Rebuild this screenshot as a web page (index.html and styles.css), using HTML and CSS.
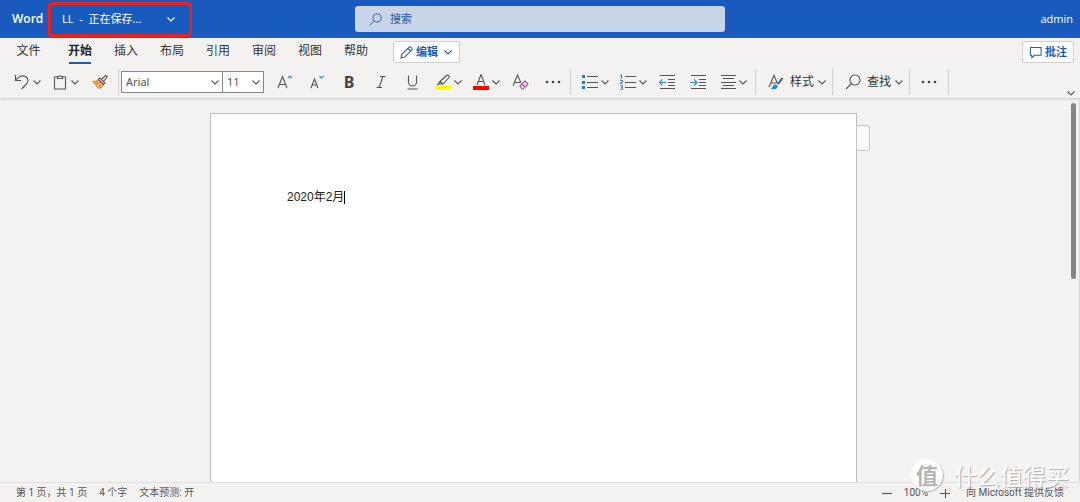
FILE: index.html
```html
<!DOCTYPE html>
<html lang="zh-CN">
<head>
<meta charset="utf-8">
<meta name="viewport" content="width=device-width, initial-scale=1">
<title>LL - Word</title>
<link rel="stylesheet" href="styles.css">
</head>
<body>
<svg class="defs" aria-hidden="true">
  <symbol id="chev" viewBox="0 0 10 10"><path d="M1.500 3.500l3.500 3.500 3.500-3.500"/></symbol>
  <symbol id="search" viewBox="0 0 16 16"><circle cx="10" cy="6" r="5"/><path d="M6.500 9.500L1 15"/></symbol>
  <symbol id="more" viewBox="0 0 16 16"><g fill="#444" stroke="none"><circle cx="2" cy="8" r="1.300"/><circle cx="8" cy="8" r="1.300"/><circle cx="14" cy="8" r="1.300"/></g></symbol>
</svg>
<header class="topbar">
  <div class="topbar-left">
    <span class="brand">Word</span>
    <button class="doc-title" type="button"><span>LL&nbsp; -&nbsp; 正在保存...</span><svg class="chev"><use href="#chev"/></svg></button>
  </div>
  <label class="search">
    <svg class="search-icon"><use href="#search"/></svg>
    <input type="search" placeholder="搜索" aria-label="搜索">
  </label>
  <button class="account" type="button">admin</button>
</header>

<section class="ribbon">
  <div class="tab-row">
    <nav class="tabs">
      <button class="tab tab-file" type="button">文件</button>
      <button class="tab active" type="button">开始</button>
      <button class="tab" type="button">插入</button>
      <button class="tab" type="button">布局</button>
      <button class="tab" type="button">引用</button>
      <button class="tab" type="button">审阅</button>
      <button class="tab" type="button">视图</button>
      <button class="tab" type="button">帮助</button>
    </nav>
    <button class="pill" type="button">
      <svg class="pill-icon" viewBox="0 0 14 14"><path d="M1 13l1-4 7.500-7.500a1.600 1.600 0 0 1 2.500 0l.5.5a1.600 1.600 0 0 1 0 2.500L5 12zM8.500 2.500l3 3"/></svg>
      编辑
      <svg class="chev"><use href="#chev"/></svg>
    </button>
    <button class="pill comments" type="button">
      <svg class="pill-icon" viewBox="0 0 14 14"><path d="M1.500 1.500h11.500v8.500H6l-3 2.500V10H1.500z"/></svg>
      批注
    </button>
  </div>

  <div class="toolbar">
    <div class="group group-clip">
      <button class="split" type="button" aria-label="撤消"><svg class="icon" viewBox="0 0 16 16"><path d="M1.500 1v5.500H7M1.500 6.500C5 2.500 8.500 1 11.500 2.500c3.500 2 3 5.500.5 8L7.500 15"/></svg><svg class="chev"><use href="#chev"/></svg></button>
      <button class="split" type="button" aria-label="粘贴"><svg class="icon" viewBox="0 0 16 16"><path d="M5.500 3H2.500v12h11V3h-3M5.500 4.500v-2h1.300a1.300 1.300 0 0 1 2.400 0h1.300v2z"/></svg><svg class="chev"><use href="#chev"/></svg></button>
      <button class="tool" type="button" aria-label="格式刷"><svg class="icon" viewBox="0 0 16 16"><path d="M1 7.500c2.500.5 4-.5 5.500-2l5 5c-1 2-2 3-4 4z" fill="#f8b878" stroke="#e8822c"/><path d="M3 9.500c3 0 4-1 5-1.500M7 13l2-3" stroke="#e8822c"/><path d="M6.500 5.500l1.500-1.500 5 5-1.500 1.500zM9.500 5.500L13 2a1.200 1.200 0 0 1 1.700 1.700L11.500 7.500" fill="#f3f2f1"/></svg></button>
    </div>
    <div class="group group-font">
      <div class="combo combo-font"><select aria-label="字体"><option>Arial</option></select><svg class="chev"><use href="#chev"/></svg></div>
      <div class="combo combo-size"><select aria-label="字号"><option>11</option></select><svg class="chev"><use href="#chev"/></svg></div>
      <button class="tool first-tool" type="button" aria-label="增大字号"><svg class="icon" viewBox="0 0 16 16"><path d="M1 14L5.500 2.500 10 14M2.600 10.500h5.800"/><path d="M11 4l2-2 2 2" stroke="#2b88d8"/></svg></button>
      <button class="tool" type="button" aria-label="减小字号"><svg class="icon" viewBox="0 0 16 16"><path d="M2 14L5.500 5l3.500 9M3.300 11h4.400"/><path d="M10.500 2l2 2 2-2" stroke="#2b88d8"/></svg></button>
      <button class="tool letter bold" type="button" aria-label="加粗">B</button>
      <button class="tool" type="button" aria-label="倾斜"><svg class="icon" viewBox="0 0 16 16"><path d="M7 2.500h5.500M9.800 2.500L6.200 13.500M3.500 13.500H9"/></svg></button>
      <button class="tool" type="button" aria-label="下划线"><svg class="icon" viewBox="0 0 16 16"><path d="M3.500 1.500v6.500a4 4 0 0 0 8 0V1.500M2.500 15h10"/></svg></button>
      <button class="split" type="button" aria-label="突出显示"><svg class="icon" viewBox="0 0 16 16"><path d="M5 7.500l6.500-6c1-1 3.500.5 2.500 2L8 10zM5 7.500L3.500 10H8M3.500 10l-1.500 1"/><path class="swatch" d="M0 12h16v4H0z" fill="#ff0"/></svg><svg class="chev"><use href="#chev"/></svg></button>
      <button class="split" type="button" aria-label="字体颜色"><svg class="icon" viewBox="0 0 16 16"><path d="M4 11L8 .5l4 10.500M5.500 7.500h5"/><path class="swatch" d="M0 12h16v4H0z" fill="#f00"/></svg><svg class="chev"><use href="#chev"/></svg></button>
      <button class="tool" type="button" aria-label="清除格式"><svg class="icon" viewBox="0 0 16 16"><path d="M0 12L4.500 1 8 9M1.500 8.500h5.500"/><path d="M7 12l5-5 3 3-5 5H9zM9 10l3 3" stroke="#a846b5"/></svg></button>
      <button class="tool" type="button" aria-label="更多字体选项"><svg class="icon"><use href="#more"/></svg></button>
    </div>
    <div class="group group-para">
      <button class="split" type="button" aria-label="项目符号"><svg class="icon" viewBox="0 0 16 16"><path d="M5 2.500h11M5 8.500h11M5 13.500h11"/><path d="M0 1h3v3H0zM0 7h3v3H0zM0 12h3v3H0z" fill="#1e7fcb" stroke="none"/></svg><svg class="chev"><use href="#chev"/></svg></button>
      <button class="split" type="button" aria-label="编号"><svg class="icon" viewBox="0 0 16 16"><path d="M5 2.500h11M5 8.500h11M5 13.500h11"/><path d="M0 1h1.500v4M.3 6.500h2v1.300L.3 9.500h2.200M.3 11.500h2v2H1M2.300 13.500v2h-2" stroke="#2b88d8"/></svg><svg class="chev"><use href="#chev"/></svg></button>
      <button class="tool snug" type="button" aria-label="减少缩进"><svg class="icon" viewBox="0 0 16 16"><path d="M1 1.500h15M9 5.500h7M9 8.500h7M9 11.500h7M1 14.500h15"/><path d="M7.500 8.500h-7M3.500 5.500l-3 3 3 3" stroke="#2b88d8"/></svg></button>
      <button class="tool" type="button" aria-label="增加缩进"><svg class="icon" viewBox="0 0 16 16"><path d="M1 1.500h15M9 5.500h7M9 8.500h7M9 11.500h7M1 14.500h15"/><path d="M0 8.500h7M4 5.500l3 3-3 3" stroke="#2b88d8"/></svg></button>
      <button class="split" type="button" aria-label="对齐"><svg class="icon" viewBox="0 0 16 16"><path d="M1 1.500h15M3 4.500h11M1 8.500h15M3 11.500h11M1 14.500h15"/></svg><svg class="chev"><use href="#chev"/></svg></button>
    </div>
    <div class="group group-wide">
      <button class="split labelled" type="button"><svg class="icon" viewBox="0 0 16 16"><path d="M1 13L6 1.500l3.500 8M3 9h5.500"/><path d="M14.500 4l-4.500 6" stroke-width="2"/><path d="M2.500 15c2 0 2-4.500 4.500-4.500 3 0 3.500 2.500 1.500 4-1.500 1-4 1-6 .5z" fill="#2b88d8" stroke="none"/></svg><span>样式</span><svg class="chev"><use href="#chev"/></svg></button>
    </div>
    <div class="group group-wide">
      <button class="split labelled" type="button"><svg class="icon"><use href="#search"/></svg><span>查找</span><svg class="chev"><use href="#chev"/></svg></button>
    </div>
    <div class="group group-last">
      <button class="tool" type="button" aria-label="更多选项"><svg class="icon"><use href="#more"/></svg></button>
    </div>
    <button class="collapse" type="button" aria-label="折叠功能区"><svg class="chev"><use href="#chev"/></svg></button>
  </div>
</section>

<main class="workspace">
  <article class="page">
    <p class="line">2020年2月<span class="caret"></span></p>
    <div class="page-flag"></div>
  </article>
  <div class="scroll-thumb"></div>
</main>

<footer class="status">
  <span>第 1 页，共 1 页</span>
  <span>4 个字</span>
  <span>文本预测: 开</span>
  <div class="zoom">
    <button type="button" aria-label="缩小"><svg viewBox="0 0 10 10"><path d="M0 5.500h10"/></svg></button>
    <span>100%</span>
    <button type="button" aria-label="放大"><svg viewBox="0 0 10 10"><path d="M0 5.500h10M5.500 1v9"/></svg></button>
  </div>
  <button class="feedback" type="button">向 Microsoft 提供反馈</button>
</footer>

<div class="watermark"><span class="seal">值</span><span class="mark">什么值得买</span></div>
</body>
</html>
```
FILE: styles.css
```css
* { box-sizing: border-box; }

body {
  margin: 0;
  height: 100vh;
  display: flex;
  flex-direction: column;
  overflow: hidden;
  position: relative;
  background: #f3f3f3;
  color: #333;
  font: 12px/16px "Noto Sans", "Noto Sans CJK SC", sans-serif;
}

button, input, select {
  font: inherit;
  color: inherit;
  background: none;
  border: 0;
  margin: 0;
  padding: 0;
}

svg {
  flex: none;
  fill: none;
  stroke: currentColor;
  stroke-width: 1.1;
}

.defs { position: absolute; width: 0; height: 0; }
.chev { width: 10px; height: 10px; }
.icon { width: 16px; height: 16px; }
.swatch { stroke: none; }

/* Top bar */
.topbar {
  display: grid;
  grid-template-columns: 1fr 370px 1fr;
  align-items: center;
  height: 38px;
  background: #185abd;
  color: #fff;
}

.topbar-left { display: flex; align-items: center; padding-left: 12px; }
.brand { width: 36px; font: 600 12px/16px "Open Sans", sans-serif; }

.doc-title {
  display: flex;
  align-items: center;
  justify-content: space-between;
  width: 144px;
  height: 35px;
  padding: 0 13px 0 11px;
  border: 3px solid #e5231f;
  border-radius: 4px;
  font-size: 11px;
}

.search {
  display: flex;
  align-items: center;
  gap: 8px;
  height: 26px;
  padding: 0 14px;
  border-radius: 3px;
  background: #c8d4e8;
  color: #2b579a;
}

.search-icon { width: 13px; height: 13px; }
.search input { flex: 1; min-width: 0; outline: 0; font-size: 11px; }
.search input::placeholder { color: #2b579a; opacity: 1; }
.account { justify-self: end; padding-right: 7px; font: 11px/16px "Open Sans", sans-serif; }

/* Ribbon */
.ribbon {
  background: #f3f2f1;
  border-bottom: 1px solid #d6d6d6;
  box-shadow: 0 1px 2px #dedede;
}

.tab-row { display: flex; align-items: center; height: 28px; padding-right: 6px; }
.tabs { display: flex; }
.tab { width: 46px; height: 24px; padding-bottom: 2px; }
.tab-file { width: 57px; }
.active { font-weight: 700; color: #222; position: relative; }

.active::after {
  content: "";
  position: absolute;
  left: 12px;
  right: 12px;
  bottom: 0;
  height: 2px;
  background: #185abd;
}

.pill {
  display: flex;
  align-items: center;
  gap: 3px;
  height: 22px;
  margin-left: 14px;
  padding: 0 6px;
  border: 1px solid #d2d0ce;
  border-radius: 2px;
  background: #fff;
  color: #185abd;
  font-size: 11px;
  font-weight: 700;
}

.pill .chev { margin-left: 2px; }
.pill-icon { width: 13px; height: 13px; }
.comments { margin-left: auto; }

/* Toolbar */
.toolbar { display: flex; align-items: center; height: 32px; color: #555; }

.group {
  display: flex;
  align-items: center;
  gap: 2px;
  height: 26px;
  border-right: 1px solid #d2d0ce;
}

.group-clip { padding: 0 3px 0 9px; }
.group-font { padding: 0 2px; }
.group-para { padding: 0 4px 0 6px; }
.group-wide { padding: 0 2px 0 7px; }
.group-last { padding: 0 4px; }

.split { display: flex; align-items: center; gap: 2px; height: 24px; padding: 0 3px 0 5px; }
.labelled { gap: 3px; color: #333; }
.labelled span { margin-left: 3px; }
.labelled svg { color: #555; }

.tool {
  display: flex;
  align-items: center;
  justify-content: center;
  width: 30px;
  height: 24px;
}

.snug { width: 28px; }
.letter { font-size: 16px; color: #444; }
.bold { font-weight: 700; }
.first-tool { margin-left: 4px; }

.combo {
  display: flex;
  align-items: center;
  height: 22px;
  padding-right: 2px;
  border: 1px solid #8a8886;
  background: #fff;
}

.combo select { appearance: none; flex: 1; min-width: 0; padding-left: 4px; font-size: 11px; outline: 0; }
.combo-font { width: 102px; }
.combo-size { width: 42px; margin-left: -3px; }
.collapse { align-self: flex-end; margin-left: auto; padding-right: 4px; line-height: 0; }

/* Document */
.workspace {
  flex: 1;
  min-height: 0;
  display: flex;
  justify-content: center;
  padding: 14px 12px 0 0;
  border-right: 1px solid #d6d6d6;
  position: relative;
}

.page {
  position: relative;
  width: 647px;
  max-width: 94%;
  padding: 75px 76px;
  border: 1px solid #bdbdbd;
  border-bottom: 0;
  background: #fff;
}

.line { margin: 0; font-family: "Liberation Sans", "Noto Sans CJK SC", sans-serif; color: #222; }
.caret { display: inline-block; height: 13px; border-left: 1px solid #000; vertical-align: middle; }

.page-flag {
  position: absolute;
  left: 100%;
  top: 11px;
  width: 14px;
  height: 26px;
  border: 1px solid #c4c4c4;
  border-radius: 0 2px 2px 0;
  background: #fafafa;
}

.scroll-thumb {
  position: absolute;
  top: 4px;
  right: 3px;
  width: 5px;
  height: 176px;
  border-radius: 3px;
  background: #858585;
}

/* Status bar */
.status {
  display: flex;
  align-items: center;
  gap: 12px;
  height: 20px;
  padding: 0 16px;
  border-top: 1px solid #e1dfdd;
  background: #f3f2f1;
  color: #555;
  font: 10px/14px Roboto, "Noto Sans CJK SC", sans-serif;
}

.zoom { display: flex; align-items: center; gap: 12px; margin-left: auto; }
.zoom button { line-height: 0; }
.zoom svg { width: 10px; height: 10px; }
.feedback { margin-left: 4px; }

/* Watermark */
.watermark {
  position: absolute;
  right: 11px;
  bottom: 11px;
  display: flex;
  align-items: center;
  gap: 11px;
  color: #fff;
  font-family: "Noto Sans CJK SC", sans-serif;
  pointer-events: none;
}

.seal {
  width: 32px;
  height: 32px;
  border-radius: 50%;
  background: #fff;
  box-shadow: 1px 1px 1px #bbb;
  color: #b5b5b5;
  font-size: 22px;
  line-height: 31px;
  text-align: center;
  font-weight: 700;
}

.mark { font-size: 23px; line-height: 30px; text-shadow: 1px 1px 1px #aaa; }
```
